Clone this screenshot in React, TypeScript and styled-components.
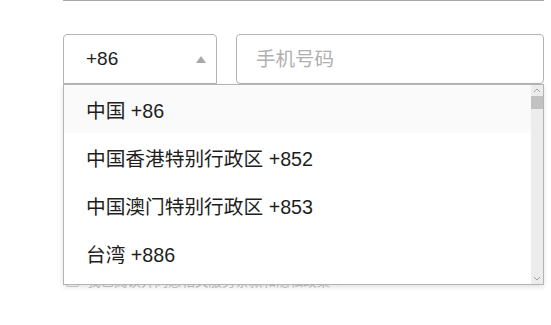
import styled, { createGlobalStyle } from 'styled-components'

const GlobalStyle = createGlobalStyle`
    body {
        margin: 0;
        background: #fff;
        font-family: "Liberation Sans", "Noto Sans CJK SC", sans-serif;
        color: #222;
    }
`

const Page = styled.div`
    width: 551px;
    height: 325px;
    overflow: hidden;
    padding-left: 63px;
    box-sizing: border-box;
`

const PrevFieldEdge = styled.div`
    width: 481px;
    height: 1px;
    background: #a8a8a8;
`

const FieldRow = styled.div`
    display: flex;
    gap: 19px;
    margin-top: 33px;
    width: 481px;
`

const SelectWrap = styled.div`
    position: relative;
    width: 154px;
    flex: none;
`

const SelectBox = styled.div`
    height: 50px;
    box-sizing: border-box;
    border: 1px solid #b4b4b4;
    border-radius: 4px 4px 0 0;
    display: flex;
    align-items: center;
    justify-content: space-between;
    padding: 0 10px 0 22px;
    font-size: 19px;
`

const Caret = styled.span`
    width: 0;
    height: 0;
    border-left: 5.5px solid transparent;
    border-right: 5.5px solid transparent;
    border-bottom: 7px solid #a8a8a8;
`

const PhoneInput = styled.input`
    flex: 1;
    height: 50px;
    box-sizing: border-box;
    border: 1px solid #b4b4b4;
    border-radius: 4px;
    padding: 0 19px;
    font-family: inherit;
    font-size: 19.5px;
    outline: none;
    &::placeholder {
        color: #b0b0b0;
    }
`

const Dropdown = styled.div`
    position: absolute;
    top: 50px;
    left: 0;
    width: 481px;
    height: 201px;
    box-sizing: border-box;
    border: 1px solid #b4b4b4;
    background: #fff;
    box-shadow: 0 2px 5px rgba(0, 0, 0, 0.12);
    display: flex;
    z-index: 2;
`

const OptionList = styled.ul`
    flex: 1;
    list-style: none;
    margin: 0;
    padding: 0;
`

const Option = styled.li<{ $active?: boolean }>`
    height: 48px;
    display: flex;
    align-items: center;
    padding-left: 22px;
    font-size: 19.7px;
    color: #1e1e1e;
    background: ${(p) => (p.$active ? '#fafafa' : '#fff')};
`

const Scrollbar = styled.div`
    width: 12px;
    background: #ececec;
    display: flex;
    flex-direction: column;
    align-items: center;
`

const ScrollArrow = styled.div`
    height: 11px;
    width: 12px;
    display: flex;
    align-items: center;
    justify-content: center;
`

const Thumb = styled.div`
    width: 12px;
    height: 13px;
    background: #c2c2c2;
`

const Track = styled.div`
    flex: 1;
`

const AgreeRow = styled.div`
    display: flex;
    align-items: center;
    gap: 8px;
    margin-top: 186px;
    padding-left: 3px;
    font-size: 13.5px;
    color: #c4c4c4;
`

const CheckBox = styled.span`
    width: 11px;
    height: 11px;
    border: 1px solid #cfcfcf;
    border-radius: 2px;
    flex: none;
`

const Chevron = ({ up }: { up?: boolean }) => (
    <svg width="8" height="5" viewBox="0 0 8 5">
        <path
            d={up ? 'M1 4 L4 1 L7 4' : 'M1 1 L4 4 L7 1'}
            fill="none"
            stroke="#a0a0a0"
            strokeWidth="1"
        />
    </svg>
)

const codes = [
    { name: '中国', code: '+86' },
    { name: '中国香港特别行政区', code: '+852' },
    { name: '中国澳门特别行政区', code: '+853' },
    { name: '台湾', code: '+886' },
]

export default function App() {
    return (
        <>
            <GlobalStyle />
            <Page>
                <PrevFieldEdge />
                <FieldRow>
                    <SelectWrap>
                        <SelectBox>
                            +86
                            <Caret />
                        </SelectBox>
                        <Dropdown>
                            <OptionList>
                                {codes.map((c, i) => (
                                    <Option key={c.code} $active={i === 0}>
                                        {c.name} {c.code}
                                    </Option>
                                ))}
                            </OptionList>
                            <Scrollbar>
                                <ScrollArrow>
                                    <Chevron up />
                                </ScrollArrow>
                                <Thumb />
                                <Track />
                                <ScrollArrow>
                                    <Chevron />
                                </ScrollArrow>
                            </Scrollbar>
                        </Dropdown>
                    </SelectWrap>
                    <PhoneInput placeholder="手机号码" />
                </FieldRow>
                <AgreeRow>
                    <CheckBox />
                    我已阅读并同意相关服务条款和隐私政策 ▾
                </AgreeRow>
            </Page>
        </>
    )
}
